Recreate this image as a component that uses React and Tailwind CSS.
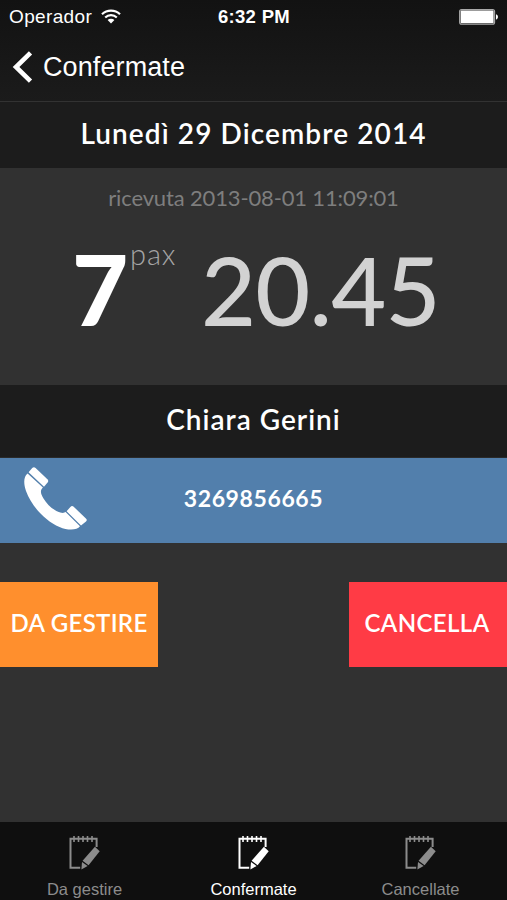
import clsx from "clsx";

const tabs = [
  { label: "Da gestire", active: false },
  { label: "Confermate", active: true },
  { label: "Cancellate", active: false },
];

function WifiIcon() {
  return (
    <svg width="20" height="15" viewBox="0 0 20 15" fill="none" stroke="#fff">
      <path d="M1 5.2a13 13 0 0 1 18 0" strokeWidth="2.2" />
      <path d="M4.2 8.5a8.4 8.4 0 0 1 11.6 0" strokeWidth="2.2" />
      <path d="M6.6 11.1a4.8 4.8 0 0 1 6.8 0L10 14.6z" fill="#fff" stroke="none" />
    </svg>
  );
}

function BatteryIcon() {
  return (
    <svg width="40" height="16" viewBox="0 0 40 16">
      <rect x="0.6" y="0.6" width="35" height="14.6" rx="2" fill="none" stroke="#aaa" strokeWidth="1.1" />
      <rect x="1.6" y="1.6" width="33" height="12.6" rx="0.8" fill="#fff" />
      <path d="M37 5.2c2.6 0.8 2.6 4.6 0 5.4z" fill="#fff" />
    </svg>
  );
}

function PhoneIcon() {
  return (
    <svg width="64" height="64" viewBox="0 0 64 64" fill="#fff">
      <path d="M4.6 5.2 8.2 1.1Q9.9-0.6 11.6 1L23.4 12.2Q25 14 23.6 15.6L20 19.7z" />
      <path d="M3.6 6.4 18.9 20.6C16 23.5 16.4 26.5 19.5 31.5C23.5 38 30 44 37.2 45.8C39.2 46.2 40.6 45.8 41.6 45.1L56 59.3C53 63.4 44 63.7 35.5 60C20.5 53.5 7.5 39 2 24C-0.5 17-0.6 9.5 3.6 6.4z" />
      <path d="M42.6 44.2 46.4 40Q48 38.2 49.7 39.8L61.9 51.4Q63.6 53 62 54.6L57 58.4z" />
    </svg>
  );
}

function NotepadIcon() {
  return (
    <svg width="31" height="34" viewBox="0 0 31 34" fill="none" stroke="currentColor">
      <path d="M11.2 31.8H1.5V2.8H27.6V11" strokeWidth="2" />
      <path d="M5 0v6M9.5 0v6M14 0v6M18.5 0v6M23 0v6" strokeWidth="1.6" />
      <path d="M25.9 10.8 30.7 15.2 19.6 29.2 13.6 24.8z" fill="currentColor" stroke="none" />
      <path d="M13 26 18.6 30 12.4 33.4z" fill="currentColor" stroke="none" />
    </svg>
  );
}

function App() {
  return (
    <div className="flex flex-col w-[507px] h-[900px] overflow-hidden bg-[#313131] text-white whitespace-nowrap font-['Lato','Open_Sans',sans-serif]">

      <header className="h-[102px] bg-linear-to-b from-[#121212] to-[#1b1b1b] border-b border-[#323232] font-['Liberation_Sans',Arial,sans-serif]">
        <div className="grid grid-cols-3 items-center h-[33px] pl-[9px] pr-[8px]">
          <div className="flex items-center gap-[9px]">
            <span className="pt-[2px] text-[19px] tracking-[0.35px]">Operador</span>
            <WifiIcon />
          </div>
          <span className="text-center text-[18.5px] font-bold tracking-[0.3px]">6:32 PM</span>
          <div className="flex justify-end">
            <BatteryIcon />
          </div>
        </div>

        <div className="flex items-center h-[68px] pl-3 gap-[10px]">
          <svg width="21" height="32" viewBox="0 0 21 32" fill="none" stroke="#fff" strokeWidth="4.6">
            <path d="M18.5 1.8 4 16 18.5 30.2" />
          </svg>
          <span className="text-[27px] tracking-[0.1px]">Confermate</span>
        </div>
      </header>

      <h1 className="flex items-center justify-center h-[66px] pb-1 bg-[#1c1c1c] text-[28px] font-semibold tracking-[1.1px]">
        Lunedì 29 Dicembre 2014
      </h1>

      <section className="h-[217px] pt-[15px]">
        <p className="text-center text-[22px] leading-[30px] text-[#7e7e7e] tracking-[-0.15px]">
          ricevuta 2013-08-01 11:09:01
        </p>
        <div className="flex items-start pl-[72px] pt-[18px]">
          <span className="w-[58px] text-[97px] leading-[116px] font-black">7</span>
          <span className="w-[71px] text-[29px] leading-[46px] tracking-[0.9px] font-light text-[#a5a5a5]">pax</span>
          <span className="text-[95px] leading-[116px] tracking-[-0.8px] font-medium text-[#d2d2d2]">20.45</span>
        </div>
      </section>

      <h2 className="flex items-center justify-center h-[73px] pb-1 bg-[#1c1c1c] text-[28px] font-semibold tracking-[1px] border-b border-[#2a2a2a]">
        Chiara Gerini
      </h2>

      <a href="tel:3269856665" className="grid grid-cols-[88px_1fr_88px] items-center h-[85px] bg-[#527fac]">
        <span className="pl-6 pb-[3px]">
          <PhoneIcon />
        </span>
        <span className="pb-1 text-center text-[23px] font-bold tracking-[0.6px]">3269856665</span>
      </a>

      <div className="flex justify-between pt-[39px]">
        <button className="w-[158px] h-[85px] pb-1 bg-[#ff8f2d] text-[24px] font-semibold tracking-[0.3px]">
          DA GESTIRE
        </button>
        <button className="w-[158px] h-[85px] pb-1 pr-[2px] bg-[#ff3b45] text-[24px] font-semibold tracking-[0.4px]">
          CANCELLA
        </button>
      </div>

      <nav className="grid grid-cols-[169px_169px_165px] h-[78px] mt-auto bg-[#0f0f0f] font-['Liberation_Sans',Arial,sans-serif]">
        {tabs.map((tab) => (
          <div
            key={tab.label}
            className={clsx(
              "flex flex-col items-center pt-[14px] gap-2",
              tab.active ? "text-white" : "text-[#8c8c8c]"
            )}
          >
            <NotepadIcon />
            <span className="text-[16.5px] leading-[22px]">{tab.label}</span>
          </div>
        ))}
      </nav>

    </div>
  );
}

export default App;
